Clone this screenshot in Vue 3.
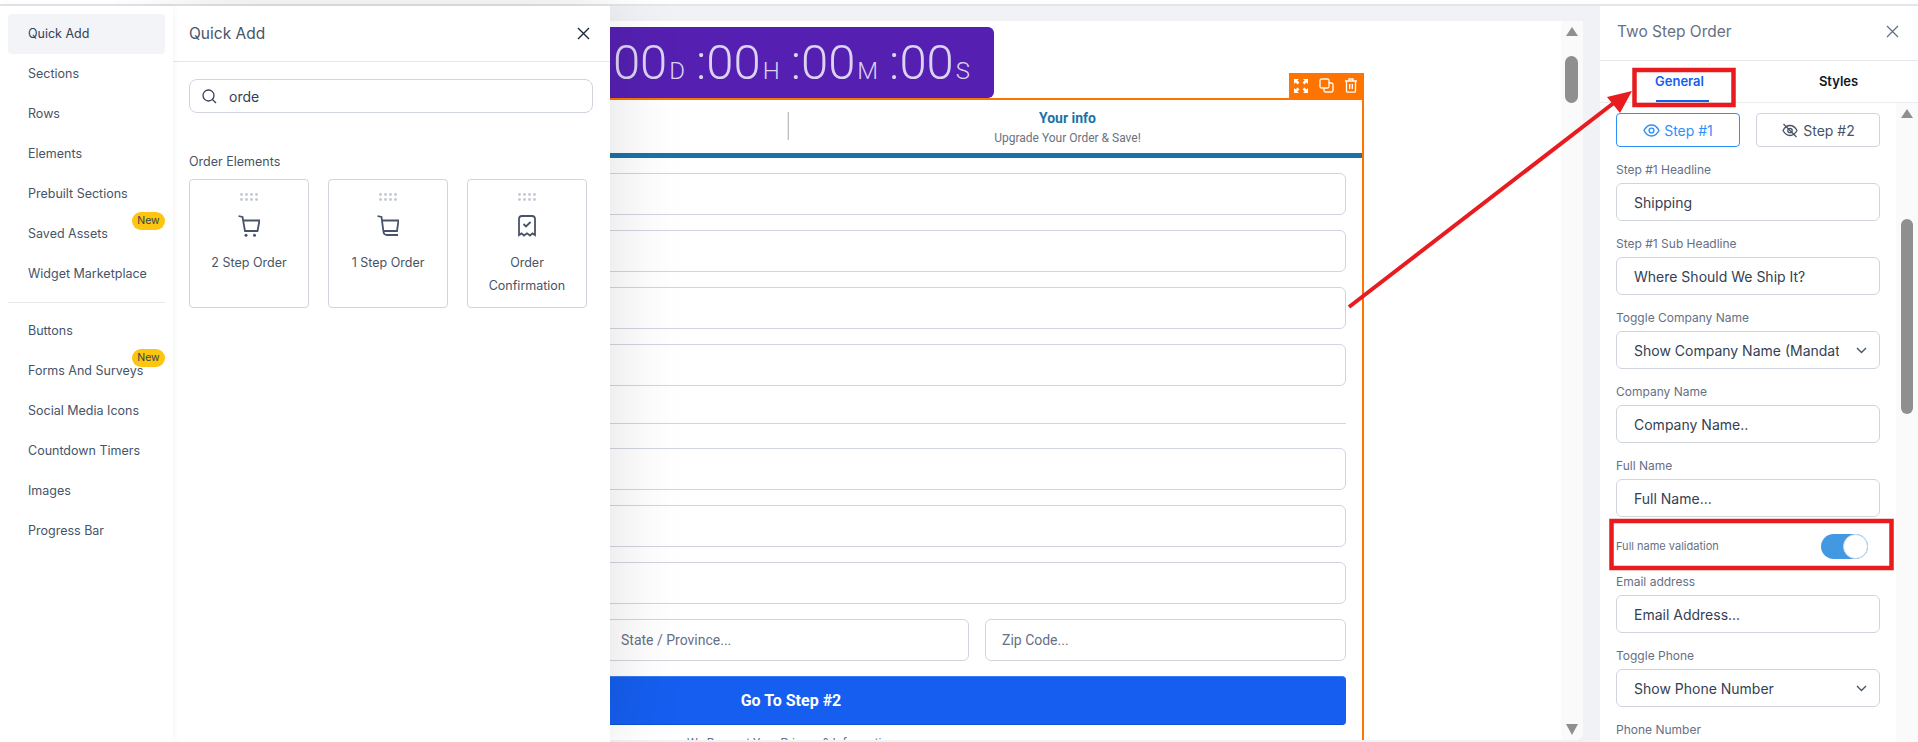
<template>
  <div class="page">
    <div class="top-line"></div>

    <div class="workspace">
      <!-- Menu de la izquierda -->
      <aside class="sidebar">
        <template v-for="(group, g) in menuGroups" :key="g">
          <hr v-if="g > 0" class="menu-divider" />
          <div
            v-for="item in group"
            :key="item.label"
            class="menu-item"
            :class="{ active: item.active }"
          >
            {{ item.label }}
            <span v-if="item.isNew" class="new-badge">New</span>
          </div>
        </template>
      </aside>

      <!-- Lienzo -->
      <main class="canvas">
        <div class="canvas-strip"></div>
        <div class="canvas-view">
          <div class="canvas-content">
            <div class="timer">
              <div v-for="part in timerParts" :key="part.unit" class="timer-part">
                <span class="timer-num">{{ part.num }}</span>
                <span class="timer-unit">{{ part.unit }}</span>
              </div>
            </div>

            <section class="order-frame">
              <div class="frame-tools">
                <svg width="14" height="14" viewBox="0 0 14 14" fill="#fff">
                  <path d="M0 0h5L3.4 1.6 5.4 3.6 3.6 5.4 1.6 3.4 0 5zM14 0v5L12.4 3.4 10.4 5.4 8.6 3.6 10.6 1.6 9 0zM0 14V9l1.6 1.6 2-2 1.8 1.8-2 2L5 14zM14 14H9l1.6-1.6-2-2 1.8-1.8 2 2L14 9z" />
                </svg>
                <svg width="15" height="15" viewBox="0 0 15 15" fill="none" stroke="#fff" stroke-width="1.3">
                  <rect x="1" y="1" width="9" height="9" rx="1.5" />
                  <path d="M10 5h2.5A1.5 1.5 0 0 1 14 6.5v6a1.5 1.5 0 0 1-1.5 1.5h-6A1.5 1.5 0 0 1 5 12.5V10" />
                </svg>
                <svg width="14" height="15" viewBox="0 0 14 15" fill="none" stroke="#fff" stroke-width="1.3">
                  <path d="M1 3h12M5 3V1h4v2M2.5 3v10a1.2 1.2 0 0 0 1.2 1.2h6.6a1.2 1.2 0 0 0 1.2-1.2V3M5.7 6v5M8.3 6v5" />
                </svg>
              </div>

              <div class="steps-head">
                <div class="step-first"></div>
                <div class="step-second">
                  <div class="step-title">Your info</div>
                  <div class="step-sub">Upgrade Your Order &amp; Save!</div>
                </div>
              </div>
              <div class="steps-bar"></div>

              <div class="order-form">
                <div v-for="n in 4" :key="'a' + n" class="form-box"></div>
                <hr class="form-divider" />
                <div v-for="n in 3" :key="'b' + n" class="form-box"></div>
                <div class="form-row">
                  <div class="form-box"></div>
                  <div class="form-box">State / Province...</div>
                  <div class="form-box">Zip Code...</div>
                </div>
                <button class="go-button">Go To Step #2</button>
                <div class="privacy">We Respect Your Privacy &amp; Information</div>
              </div>
            </section>
          </div>

          <div class="canvas-track">
            <span class="arrow-up"></span>
            <span class="canvas-thumb"></span>
            <span class="arrow-down"></span>
          </div>
        </div>
      </main>

      <!-- Panel de ajustes -->
      <aside class="settings">
        <div class="settings-head">
          <span>Two Step Order</span>
          <svg width="13" height="13" viewBox="0 0 13 13" stroke="#667085" stroke-width="1.3" fill="none">
            <path d="M1 1l11 11M12 1L1 12" />
          </svg>
        </div>
        <div class="settings-tabs">
          <div class="tab tab-on">General</div>
          <div class="tab">Styles</div>
        </div>
        <div class="settings-body">
          <div class="settings-scroll">
            <div class="step-buttons">
              <button class="step-btn step-btn-on">
                <svg width="17" height="13" viewBox="0 0 17 13" fill="none" stroke="currentColor" stroke-width="1.4">
                  <path d="M1 6.5C2.8 3 5.4 1 8.5 1s5.700 2 7.500 5.500C14.200 10 11.600 12 8.500 12S2.800 10 1 6.500z" />
                  <circle cx="8.500" cy="6.500" r="2.400" />
                </svg>
                Step #1
              </button>
              <button class="step-btn">
                <svg width="18" height="15" viewBox="0 0 18 15" fill="none" stroke="currentColor" stroke-width="1.300">
                  <path d="M2 7.500C3.800 4.200 6.200 2.500 9 2.500s5.200 1.700 7 5c-1.800 3.300-4.200 5-7 5s-5.200-1.700-7-5z" />
                  <circle cx="9" cy="7.500" r="2.200" />
                  <path d="M2.500 1l13 13" />
                </svg>
                Step #2
              </button>
            </div>

            <template v-for="field in fields" :key="field.label">
              <div v-if="field.type === 'switch'" class="switch-row">
                <span>{{ field.label }}</span>
                <span class="switch"><i></i></span>
              </div>
              <div v-else class="field">
                <label>{{ field.label }}</label>
                <div v-if="field.value" class="field-box" :class="{ select: field.type === 'select' }">
                  <span class="field-text">{{ field.value }}</span>
                  <svg v-if="field.type === 'select'" width="11" height="7" viewBox="0 0 11 7" fill="none" stroke="#475467" stroke-width="1.400">
                    <path d="M1 1l4.500 4.500L10 1" />
                  </svg>
                </div>
              </div>
            </template>
          </div>
          <div class="settings-track">
            <span class="arrow-up"></span>
            <span class="settings-thumb"></span>
          </div>
        </div>
      </aside>
    </div>

    <!-- Ventana flotante de Quick Add -->
    <section class="quick-panel">
      <header class="quick-head">
        <span>Quick Add</span>
        <svg width="13" height="13" viewBox="0 0 13 13" stroke="#1d2939" stroke-width="1.400" fill="none">
          <path d="M1 1l11 11M12 1L1 12" />
        </svg>
      </header>
      <div class="quick-body">
        <div class="search-box">
          <svg width="15" height="15" viewBox="0 0 15 15" fill="none" stroke="#344054" stroke-width="1.300">
            <circle cx="6.500" cy="6.500" r="5.500" />
            <path d="M10.500 10.500L14 14" />
          </svg>
          <span>orde</span>
        </div>
        <div class="quick-section">Order Elements</div>
        <div class="quick-cards">
          <div v-for="card in cards" :key="card.kind" class="quick-card">
            <svg class="grip" width="18" height="8" viewBox="0 0 18 8" fill="#c3c8d6">
              <template v-for="y in [1.500, 6.500]" :key="y">
                <circle v-for="x in [1.500, 6.500, 11.500, 16.500]" :key="x" :cx="x" :cy="y" r="1.400" />
              </template>
            </svg>
            <svg v-if="card.kind === 'two'" class="card-icon" width="22" height="22" viewBox="0 0 22 22" fill="none" stroke="#475467" stroke-width="1.800">
              <path d="M.5 1L4.500 2 7 16h12.500L21.500 5.500H5.300" />
              <circle cx="8" cy="20.200" r="1.500" fill="#475467" stroke="none" />
              <circle cx="16.500" cy="20.200" r="1.500" fill="#475467" stroke="none" />
            </svg>
            <svg v-else-if="card.kind === 'one'" class="card-icon" width="22" height="22" viewBox="0 0 22 22" fill="none" stroke="#475467" stroke-width="1.800">
              <path d="M.5 1L4.500 2 6.500 17q.4 3 3.500 3H21" />
              <path d="M5.200 5.500H21.500L20 16H6.800" />
            </svg>
            <svg v-else class="card-icon" width="22" height="22" viewBox="0 0 22 22" fill="none" stroke="#475467" stroke-width="1.800">
              <path d="M3 20V4a3 3 0 0 1 3-3h10a3 3 0 0 1 3 3v16l-2.500-1.600L14 20.500l-3-2.200-3 2.200-2.500-2.100z" />
              <path d="M7.500 9l2.500 2.500L14.500 7" />
            </svg>
            <div class="card-label">{{ card.label }}</div>
          </div>
        </div>
      </div>
    </section>

    <!-- Anotaciones en rojo del tutorial -->
    <svg class="annotations" width="1918" height="742" viewBox="0 0 1918 742">
      <g fill="none" stroke="#e81c1f" stroke-width="4.500">
        <rect x="1634.500" y="70" width="99" height="35" />
        <rect x="1611.500" y="521" width="280" height="47" />
      </g>
      <path d="M1349 307L1615 102" stroke="#e81c1f" stroke-width="4" />
      <path d="M1632 91L1607 97 1620 113z" fill="#e81c1f" />
    </svg>
  </div>
</template>

<script setup>
const menuGroups = [
  [
    { label: 'Quick Add', active: true },
    { label: 'Sections' },
    { label: 'Rows' },
    { label: 'Elements' },
    { label: 'Prebuilt Sections' },
    { label: 'Saved Assets', isNew: true },
    { label: 'Widget Marketplace' },
  ],
  [
    { label: 'Buttons' },
    { label: 'Forms And Surveys', isNew: true },
    { label: 'Social Media Icons' },
    { label: 'Countdown Timers' },
    { label: 'Images' },
    { label: 'Progress Bar' },
  ],
]

const cards = [
  { kind: 'two', label: '2 Step Order' },
  { kind: 'one', label: '1 Step Order' },
  { kind: 'receipt', label: 'Order Confirmation' },
]

const timerParts = [
  { num: '00', unit: 'D' },
  { num: ':00', unit: 'H' },
  { num: ':00', unit: 'M' },
  { num: ':00', unit: 'S' },
]

const fields = [
  { label: 'Step #1 Headline', value: 'Shipping' },
  { label: 'Step #1 Sub Headline', value: 'Where Should We Ship It?' },
  { label: 'Toggle Company Name', value: 'Show Company Name (Mandatory)', type: 'select' },
  { label: 'Company Name', value: 'Company Name..' },
  { label: 'Full Name', value: 'Full Name...' },
  { label: 'Full name validation', type: 'switch' },
  { label: 'Email address', value: 'Email Address...' },
  { label: 'Toggle Phone', value: 'Show Phone Number', type: 'select' },
  { label: 'Phone Number' },
]
</script>

<style>
html,
body {
  margin: 0;
  overflow: hidden;
  background: #fff;
}
</style>

<style scoped>
.page {
  position: relative;
  width: 1918px;
  height: 742px;
  overflow: hidden;
  font-family: Inter, sans-serif;
  background: #fff;
  padding-top: 4px;
  box-sizing: border-box;
}

.top-line {
  height: 2px;
  background: #e4e6e9;
}

.workspace {
  display: flex;
  height: 736px;
}

.sidebar {
  position: relative;
  z-index: 3;
  width: 173px;
  flex: none;
  box-sizing: border-box;
  padding: 8px 8px 0;
  background: #fff;
  box-shadow: 0 0 8px rgba(0, 0, 0, 0.05);
}

.menu-item {
  position: relative;
  height: 40px;
  padding-left: 20px;
  border-radius: 4px;
  font-size: 12.500px;
  line-height: 40px;
  color: #475467;
}

.menu-item.active {
  background: #f2f4f7;
  color: #344054;
}

.menu-divider {
  margin: 8px 0;
  border: 0;
  border-top: 1px solid #e6e8ec;
}

.new-badge {
  position: absolute;
  top: -2px;
  right: 0;
  width: 33px;
  height: 18px;
  border-radius: 9px;
  background: #fdc50f;
  font-size: 10.500px;
  line-height: 18px;
  text-align: center;
  color: #344054;
}

.canvas {
  flex: 1;
  min-width: 0;
  display: flex;
  flex-direction: column;
  background: #f1f2f5;
}

.canvas-strip {
  height: 15px;
  flex: none;
}

.canvas-view {
  flex: none;
  height: 719px;
  margin-right: 17px;
  display: flex;
  overflow: hidden;
  background: #fff;
  border-radius: 0 0 8px 0;
}

.canvas-content {
  flex: 1;
  min-width: 0;
  padding: 6px 0 0 46px;
  overflow: hidden;
}

.canvas-track {
  position: relative;
  width: 22px;
  flex: none;
  background: #fafafa;
}

.canvas-thumb {
  position: absolute;
  top: 35px;
  left: 4px;
  width: 13px;
  height: 47px;
  border-radius: 7px;
  background: #8f8f8f;
}

.arrow-up,
.arrow-down {
  position: absolute;
  left: 5px;
  width: 0;
  height: 0;
  border-left: 6px solid transparent;
  border-right: 6px solid transparent;
}

.arrow-up {
  top: 6px;
  border-bottom: 9px solid #8f8f8f;
}

.arrow-down {
  bottom: 5px;
  border-top: 11px solid #8f8f8f;
}

.timer {
  width: 775px;
  height: 71px;
  box-sizing: border-box;
  padding-right: 24px;
  display: flex;
  justify-content: flex-end;
  align-items: baseline;
  border-radius: 6px 6px 6px 0;
  background: #5520b2;
  font-family: Roboto, sans-serif;
  font-weight: 300;
  color: #dcd3f2;
  line-height: 71px;
}

.timer-part {
  display: flex;
  align-items: baseline;
  margin-left: 11px;
}

.timer-num {
  font-size: 49px;
}

.timer-unit {
  font-size: 24px;
  margin-left: 2px;
}

.order-frame {
  position: relative;
  width: 1145px;
  box-sizing: border-box;
  border: 2px solid #ff7300;
  border-bottom: 0;
  height: 660px;
}

.frame-tools {
  position: absolute;
  top: -27px;
  right: -2px;
  width: 75px;
  height: 27px;
  box-sizing: border-box;
  padding: 0 6px 2px 5px;
  display: flex;
  align-items: center;
  justify-content: space-between;
  background: #ff7300;
}

.steps-head {
  display: flex;
  height: 53px;
}

.step-first {
  width: 568px;
  flex: none;
  position: relative;
}

.step-first::after {
  content: '';
  position: absolute;
  top: 12px;
  right: 0;
  width: 2px;
  height: 28px;
  background: linear-gradient(90deg, #fff, #a9a9a9);
}

.step-second {
  flex: 1;
  padding: 10px 16px 0 0;
  text-align: center;
  font-family: Roboto, sans-serif;
}

.step-title {
  font-size: 14px;
  font-weight: 700;
  line-height: 16px;
  color: #1a73a8;
}

.step-sub {
  margin-top: 5px;
  font-size: 12px;
  line-height: 14px;
  color: #6b7280;
}

.steps-bar {
  height: 5px;
  background: #1a73a8;
}

.order-form {
  padding: 15px 16px 0 15px;
  font-family: Roboto, sans-serif;
}

.form-box {
  height: 42px;
  margin-bottom: 15px;
  box-sizing: border-box;
  padding-left: 16px;
  border: 1px solid #d0d5dd;
  border-radius: 6px;
  font-size: 14px;
  line-height: 40px;
  color: #667085;
}

.form-divider {
  margin: 37px 0 24px;
  border: 0;
  border-top: 1px solid #d0d5dd;
}

.form-row {
  display: grid;
  grid-template-columns: 1fr 365px 361px;
  gap: 16px;
}

.go-button {
  display: block;
  width: 100%;
  height: 49px;
  border: 0;
  border-top: 1px solid #3d7bf2;
  border-bottom: 1px solid #0f4fd0;
  border-radius: 4px;
  background: #155eef;
  color: #fff;
  font-family: Roboto, sans-serif;
  font-size: 16px;
  font-weight: 700;
}

.privacy {
  margin-top: 11px;
  text-align: center;
  font-size: 12px;
  line-height: 14px;
  color: #667085;
}

.settings {
  width: 318px;
  flex: none;
  background: #fff;
  display: flex;
  flex-direction: column;
}

.settings-head {
  height: 55px;
  flex: none;
  box-sizing: border-box;
  padding: 0 19px 4px 17px;
  display: flex;
  align-items: center;
  justify-content: space-between;
  border-bottom: 1px solid #e4e7ec;
  font-size: 15.500px;
  color: #667085;
}

.settings-tabs {
  height: 42px;
  flex: none;
  display: flex;
  box-sizing: border-box;
  border-bottom: 1px solid #eaecf0;
}

.tab {
  width: 159px;
  text-align: center;
  font-size: 13px;
  font-weight: 600;
  line-height: 41px;
  color: #101828;
}

.tab-on {
  position: relative;
  color: #155eef;
}

.tab-on::after {
  content: '';
  position: absolute;
  left: 56px;
  bottom: 0;
  width: 53px;
  height: 2px;
  background: #155eef;
}

.settings-body {
  flex: 1;
  min-height: 0;
  display: flex;
}

.settings-scroll {
  flex: 1;
  min-width: 0;
  padding: 10px 16px 0;
  overflow: hidden;
}

.settings-track {
  position: relative;
  width: 22px;
  flex: none;
  background: #fafafa;
}

.settings-thumb {
  position: absolute;
  top: 116px;
  left: 5px;
  width: 12px;
  height: 195px;
  border-radius: 6px;
  background: #8f8f8f;
}

.step-buttons {
  display: flex;
  gap: 16px;
  margin-bottom: 15px;
}

.step-btn {
  flex: 1;
  height: 34px;
  display: flex;
  align-items: center;
  justify-content: center;
  gap: 4px;
  background: #fff;
  border: 1px solid #d0d5dd;
  border-radius: 4px;
  font-family: Inter, sans-serif;
  font-size: 14px;
  color: #475467;
}

.step-btn-on {
  border-color: #2e90fa;
  color: #2e90fa;
}

.field {
  margin-bottom: 15px;
}

.field label {
  display: block;
  margin-bottom: 5px;
  font-size: 12px;
  line-height: 16px;
  color: #667085;
}

.field-box {
  height: 38px;
  box-sizing: border-box;
  padding: 0 12px 0 17px;
  display: flex;
  align-items: center;
  justify-content: space-between;
  border: 1px solid #d0d5dd;
  border-radius: 6px;
  font-size: 14px;
  color: #344054;
}

.field-box.select .field-text {
  width: 205px;
  overflow: hidden;
  white-space: nowrap;
}

.switch-row {
  height: 28px;
  margin-bottom: 14px;
  padding-right: 12px;
  display: flex;
  align-items: center;
  justify-content: space-between;
  font-size: 11px;
  color: #667085;
}

.switch {
  position: relative;
  width: 47px;
  height: 25px;
  border-radius: 13px;
  background: #4299e1;
}

.switch i {
  position: absolute;
  top: 0;
  right: 0;
  width: 25px;
  height: 25px;
  box-sizing: border-box;
  border: 1px solid #c5d9ec;
  border-radius: 50%;
  background: #fff;
}

.quick-panel {
  position: absolute;
  z-index: 2;
  top: 6px;
  left: 173px;
  width: 437px;
  height: 736px;
  background: #fff;
  box-shadow: 0 0 70px rgba(0, 0, 0, 0.13);
}

.quick-head {
  height: 56px;
  box-sizing: border-box;
  padding: 0 20px 0 16px;
  display: flex;
  align-items: center;
  justify-content: space-between;
  border-bottom: 1px solid #e4e7ec;
  font-size: 15.500px;
  color: #475467;
}

.quick-body {
  padding: 17px 17px 0 16px;
}

.search-box {
  height: 34px;
  box-sizing: border-box;
  padding-left: 12px;
  display: flex;
  align-items: center;
  gap: 12px;
  border: 1px solid #d0d5dd;
  border-radius: 8px;
  font-size: 14px;
  color: #344054;
}

.quick-section {
  margin-top: 41px;
  font-size: 12.500px;
  line-height: 16px;
  color: #475467;
}

.quick-cards {
  display: grid;
  grid-template-columns: repeat(3, 120px);
  gap: 19px;
  margin-top: 9px;
}

.quick-card {
  height: 129px;
  box-sizing: border-box;
  padding: 13px 8px 0;
  display: flex;
  flex-direction: column;
  align-items: center;
  border: 1px solid #d0d5dd;
  border-radius: 4px;
}

.grip {
  flex: none;
}

.card-icon {
  flex: none;
  margin-top: 14px;
}

.card-label {
  margin-top: 14px;
  font-size: 12.500px;
  line-height: 23px;
  text-align: center;
  color: #475467;
}

.annotations {
  position: absolute;
  z-index: 5;
  top: 0;
  left: 0;
  pointer-events: none;
}
</style>
